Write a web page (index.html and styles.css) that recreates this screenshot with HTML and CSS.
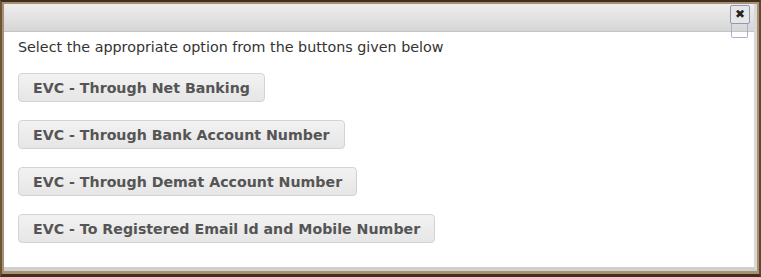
FILE: index.html
```html
<!DOCTYPE html>
<html>
  <head>
    <title>e-Verify</title>
    <meta name="viewport" content="width=device-width, initial-scale=1" />
    <link rel="stylesheet" href="styles.css">
  </head>
  <body>
    <div class="frame">
      <div class="dialog">
        <div class="titlebar">
          <button class="close" title="close">&#10006;</button>
          <span class="close-ghost"></span>
        </div>
        <div class="content">
          <p class="intro">Select the appropriate option from the buttons given below</p>
          <button class="btn">EVC - Through Net Banking</button>
          <button class="btn">EVC - Through Bank Account Number</button>
          <button class="btn">EVC - Through Demat Account Number</button>
          <button class="btn">EVC - To Registered Email Id and Mobile Number</button>
        </div>
      </div>
    </div>
  </body>
</html>
```

FILE: styles.css
```css
html, body {
  margin: 0;
  padding: 0;
}
body {
  width: 761px;
  height: 277px;
  font-family: "DejaVu Sans", Verdana, sans-serif;
  background: #4a3a28;
}
.frame {
  box-sizing: border-box;
  width: 761px;
  height: 277px;
  border-top: 2px solid #3e2f1f;
  border-left: 2px solid #6b5538;
  border-right: 2px solid #5c4830;
  border-bottom: 3px solid #3e2f1f;
  padding: 2px 2px 3px 2px;
  background: #a89070;
}
.dialog {
  height: 100%;
  background: #fff;
  border-right: 3px solid #d8d8d8;
  border-bottom: 4px solid #d0d0d0;
  box-sizing: border-box;
  display: flex;
  flex-direction: column;
}
.titlebar {
  position: relative;
  height: 27px;
  background: linear-gradient(#eeeeee, #d6d6d6);
  border-bottom: 1px solid #c4c4c4;
  flex: none;
}
.close {
  position: absolute;
  right: 4px;
  top: 1px;
  width: 20px;
  height: 19px;
  padding: 0;
  border: 1px solid #8f98b8;
  border-radius: 2px;
  background: #e6e6e6;
  color: #222;
  font-size: 12px;
  line-height: 17px;
  font-family: "DejaVu Sans", sans-serif;
  z-index: 2;
}
.close-ghost {
  position: absolute;
  right: 6px;
  top: 18px;
  width: 15px;
  height: 15px;
  border: 1px solid #a8b0cc;
  border-top: none;
  border-radius: 0 0 2px 2px;
  z-index: 1;
}
.content {
  padding: 7px 14px 0 14px;
  display: flex;
  flex-direction: column;
  align-items: flex-start;
  gap: 18px;
}
.intro {
  margin: 0;
  font-size: 14.3px;
  color: #333;
  line-height: 16px;
}
.btn {
  font-family: "DejaVu Sans", Verdana, sans-serif;
  font-weight: bold;
  font-size: 14.2px;
  color: #555;
  height: 29px;
  padding: 0 14px;
  background: linear-gradient(#f2f2f2, #e6e6e6);
  border: 1px solid #d3d3d3;
  border-radius: 4px;
}
```
